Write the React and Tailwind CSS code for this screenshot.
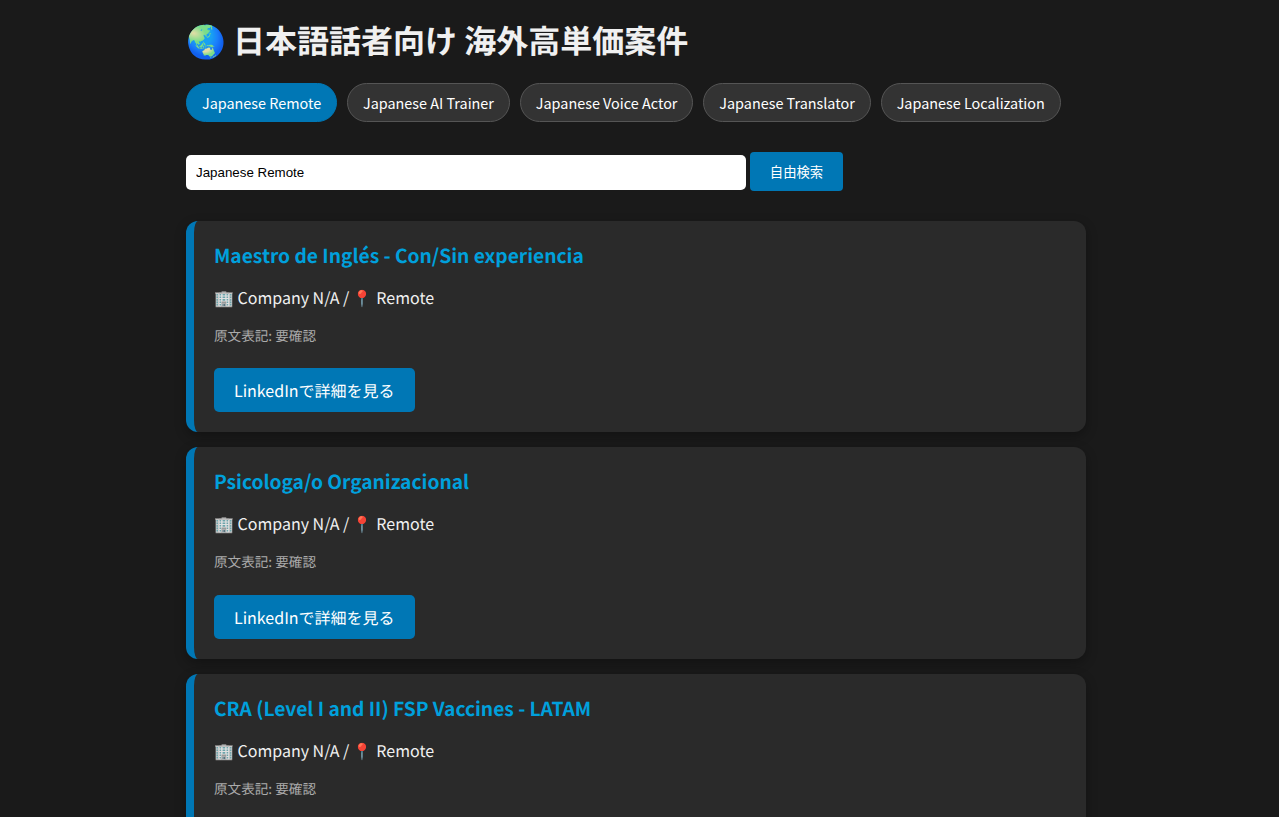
const jobs = ['Maestro de Inglés - Con/Sin experiencia', 'Psicologa/o Organizacional', 'CRA (Level I and II) FSP Vaccines - LATAM']
const tabs = ['Japanese Remote', 'Japanese AI Trainer', 'Japanese Voice Actor', 'Japanese Translator', 'Japanese Localization']

const App = () => {
    return (
        <div className="min-h-[817px] bg-[#1a1a1a] text-[#f0f0f0] font-['Noto_Sans_CJK_JP',sans-serif] [text-rendering:geometricPrecision]">
            <div className="w-[900px] ml-[186px] pt-5">
                <h1 className="text-[32px] font-bold leading-[40px] mb-[23px]">🌏 日本語話者向け 海外高単価案件</h1>

                <div className="flex gap-2.5 mb-[30px]">
                    {tabs.map((t, i) => (
                        <button key={t} className={i === 0
                            ? "h-[39px] px-[14.95px] whitespace-nowrap rounded-[20px] border border-[#0077b5] bg-[#0077b5] text-white text-[14.4px]"
                            : "h-[39px] px-[14.95px] whitespace-nowrap rounded-[20px] border border-[#555] bg-[#333] text-white text-[14.4px]"}>
                            {t}
                        </button>
                    ))}
                </div>

                <div className="flex items-center gap-1 mb-[29.6px]">
                    <input className="w-[560px] h-[35px] mt-[1px] px-2.5 rounded-[5px] bg-white text-black text-[13.33px] font-['Liberation_Sans',sans-serif] outline-none" defaultValue="Japanese Remote" />
                    <button className="w-[93px] h-[39px] rounded bg-[#0077b5] text-white text-[13.33px]">自由検索</button>
                </div>

                {jobs.map((j) => (
                    <div key={j} className="mb-[15px] h-[211.6px] bg-[#2a2a2a] rounded-xl border-l-[8px] border-[#0077b5] pl-5 pr-5 pt-5 shadow-[0_4px_12px_rgba(0,0,0,0.3)]">
                        <h2 className="text-[19.2px] font-bold text-[#00a0dc] leading-[28px]">{j}</h2>
                        <p className="mt-[16px] text-base leading-6">🏢 Company N/A / 📍 Remote</p>
                        <p className="mt-[16px] text-[13.6px] text-[#aaa] leading-[20px]">原文表記: 要確認</p>
                        <a className="inline-flex items-center mt-[23.4px] h-11 px-5 rounded-[5px] bg-[#0077b5] text-white text-base">LinkedInで詳細を見る</a>
                    </div>
                ))}
            </div>
        </div>
    );
};

export default App;
